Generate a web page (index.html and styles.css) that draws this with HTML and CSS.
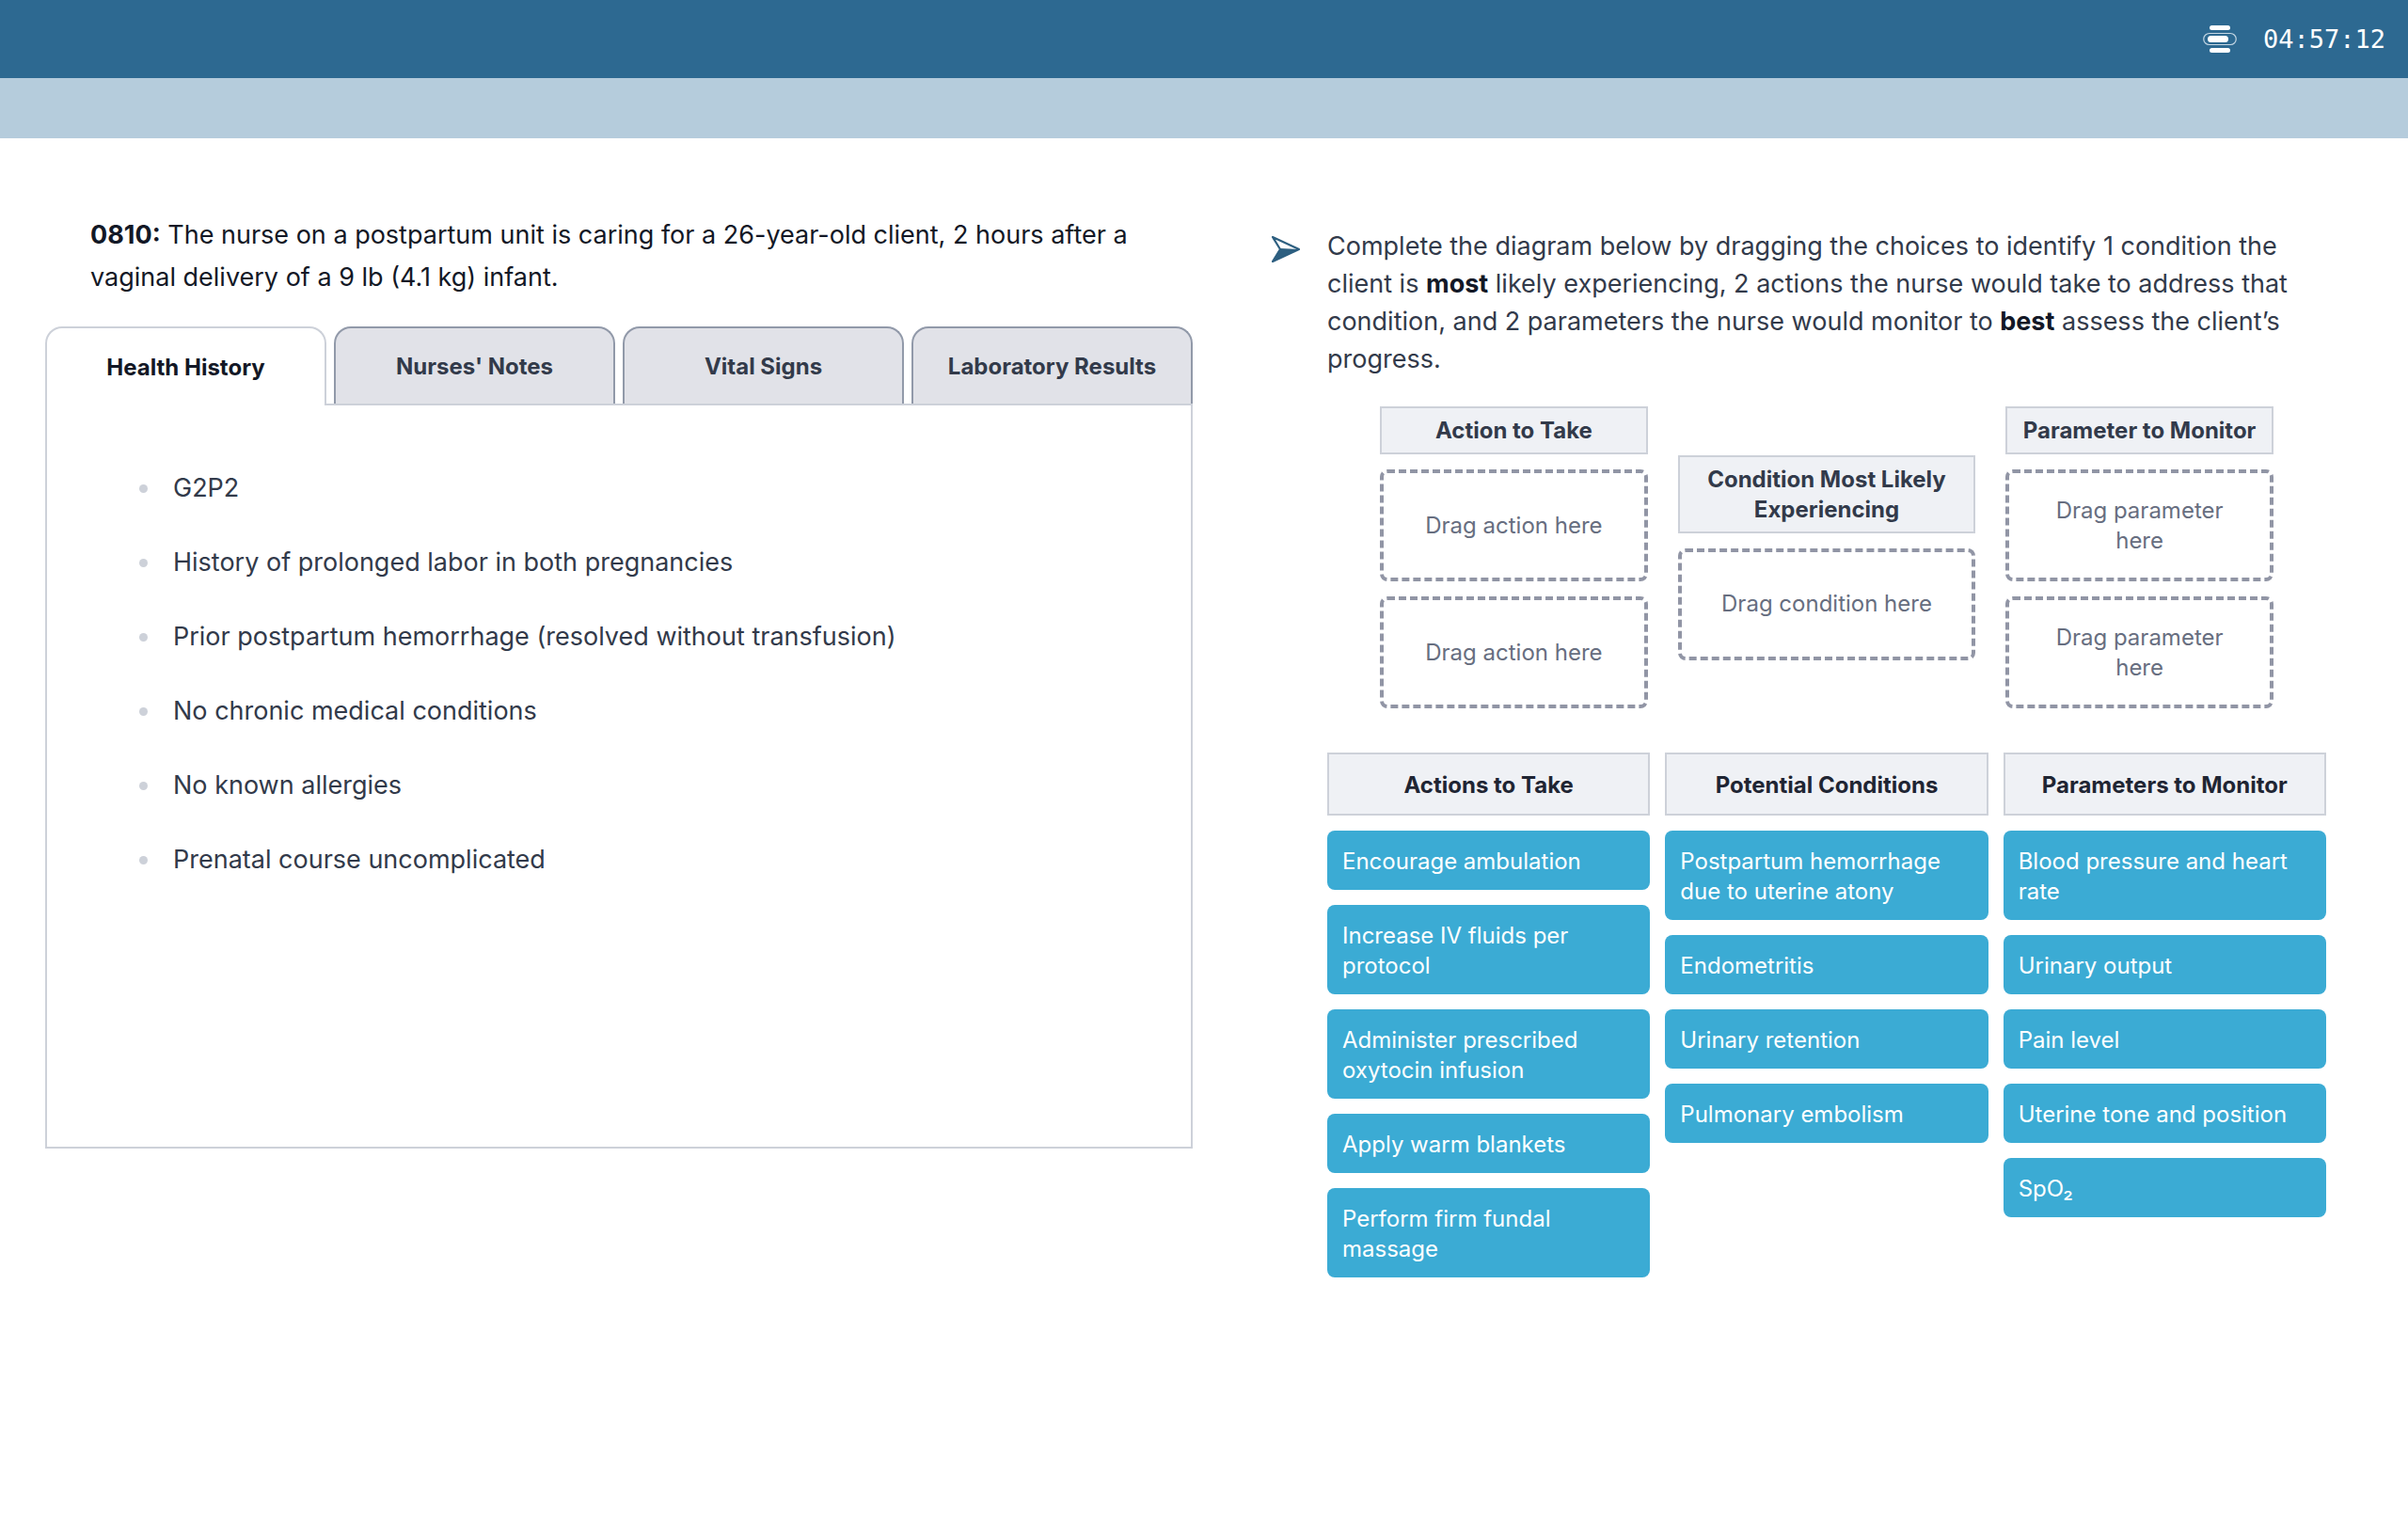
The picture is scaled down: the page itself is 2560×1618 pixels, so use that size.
FILE: index.html
```html
<!DOCTYPE html>
<html lang="en">
<head>
  <meta charset="UTF-8" />
  <meta name="viewport" content="width=device-width, initial-scale=1.0" />
  <title>Postpartum Case Study</title>
  <link rel="stylesheet" href="styles.css">
</head>
<body>
  <header class="top-bar">
    <svg class="timer-icon" viewBox="0 0 36 30" aria-hidden="true">
      <rect x="7" y="0" width="22" height="5" rx="2.5" fill="#fff" />
      <rect x="0.75" y="8.5" width="34.5" height="12" rx="6" fill="none" stroke="#c3d6e3" stroke-width="1.2" />
      <rect x="5" y="11" width="22" height="7" rx="3.5" fill="#fff" />
      <rect x="7" y="24" width="22" height="5" rx="2.5" fill="#fff" />
    </svg>
    <span class="timer">04:57:12</span>
  </header>
  <div class="sub-bar"></div>

  <main class="question">
    <section class="case">
      <p class="scenario"><strong>0810:</strong> The nurse on a postpartum unit is caring for a 26-year-old client, 2 hours after a vaginal delivery of a 9 lb (4.1 kg) infant.</p>

      <div class="tabs" role="tablist">
        <button class="tab active" role="tab" aria-selected="true">Health History</button>
        <button class="tab" role="tab" aria-selected="false">Nurses' Notes</button>
        <button class="tab" role="tab" aria-selected="false">Vital Signs</button>
        <button class="tab" role="tab" aria-selected="false">Laboratory Results</button>
      </div>
      <div class="tab-panel" role="tabpanel">
        <ul class="history">
          <li>G2P2</li>
          <li>History of prolonged labor in both pregnancies</li>
          <li>Prior postpartum hemorrhage (resolved without transfusion)</li>
          <li>No chronic medical conditions</li>
          <li>No known allergies</li>
          <li>Prenatal course uncomplicated</li>
        </ul>
      </div>
    </section>

    <section class="answer">
      <svg class="arrow-icon" viewBox="0 0 30 28" aria-hidden="true">
        <path d="M1 1 L29 14 L1 27 L9 14 Z" fill="none" stroke="#2d5f80" stroke-width="2.2" stroke-linejoin="round" />
        <path d="M9 13 L29 14 L1 27 Z" fill="#2d5f80" />
      </svg>
      <div class="answer-body">
        <p class="instructions">Complete the diagram below by dragging the choices to identify 1 condition the client is <strong>most</strong> likely experiencing, 2 actions the nurse would take to address that condition, and 2 parameters the nurse would monitor to <strong>best</strong> assess the client’s progress.</p>

        <div class="diagram">
          <div class="diagram-column">
            <h3 class="diagram-title">Action to Take</h3>
            <div class="drop-zone">Drag action here</div>
            <div class="drop-zone">Drag action here</div>
          </div>
          <div class="diagram-column">
            <h3 class="diagram-title">Condition Most Likely Experiencing</h3>
            <div class="drop-zone">Drag condition here</div>
          </div>
          <div class="diagram-column">
            <h3 class="diagram-title">Parameter to Monitor</h3>
            <div class="drop-zone">Drag parameter here</div>
            <div class="drop-zone">Drag parameter here</div>
          </div>
        </div>

        <div class="choices">
          <div class="choice-column">
            <h3 class="choice-title">Actions to Take</h3>
            <button class="choice" draggable="true">Encourage ambulation</button>
            <button class="choice" draggable="true">Increase IV fluids per protocol</button>
            <button class="choice" draggable="true">Administer prescribed oxytocin infusion</button>
            <button class="choice" draggable="true">Apply warm blankets</button>
            <button class="choice" draggable="true">Perform firm fundal massage</button>
          </div>
          <div class="choice-column">
            <h3 class="choice-title">Potential Conditions</h3>
            <button class="choice" draggable="true">Postpartum hemorrhage due to uterine atony</button>
            <button class="choice" draggable="true">Endometritis</button>
            <button class="choice" draggable="true">Urinary retention</button>
            <button class="choice" draggable="true">Pulmonary embolism</button>
          </div>
          <div class="choice-column">
            <h3 class="choice-title">Parameters to Monitor</h3>
            <button class="choice" draggable="true">Blood pressure and heart rate</button>
            <button class="choice" draggable="true">Urinary output</button>
            <button class="choice" draggable="true">Pain level</button>
            <button class="choice" draggable="true">Uterine tone and position</button>
            <button class="choice" draggable="true">SpO₂</button>
          </div>
        </div>
      </div>
    </section>
  </main>
</body>
</html>
```
FILE: styles.css
```css
* {
  box-sizing: border-box;
}
body {
  margin: 0;
  font-family: Inter, "Liberation Sans", sans-serif;
  font-size: 27px;
  line-height: 40px;
  color: #323a4a;
  background: #fff;
}
h3, p, ul {
  margin: 0;
}
button {
  font-family: inherit;
  cursor: pointer;
}
.top-bar {
  display: flex;
  align-items: center;
  justify-content: flex-end;
  gap: 28px;
  height: 83px;
  padding: 0 24px;
  background: #2d6991;
}
.timer-icon {
  width: 36px;
  height: 30px;
}
.timer {
  font-family: "DejaVu Sans Mono", monospace;
  color: #fff;
}
.sub-bar {
  height: 64px;
  background: #b5ccdc;
}
.question {
  display: grid;
  grid-template-columns: 1fr 1fr;
}
.case {
  padding: 80px 12px 48px 48px;
}
.scenario {
  padding: 0 48px;
  line-height: 45px;
  color: #131826;
}
.tabs {
  display: grid;
  grid-template-columns: repeat(4, 1fr);
  gap: 8px;
  margin-top: 30px;
}
.tab {
  height: 82px;
  padding: 0;
  font-size: 24px;
  font-weight: 700;
  color: #323a4a;
  background: #e1e2e8;
  border: 2px solid #9199a9;
  border-bottom: none;
  border-radius: 18px 18px 0 0;
}
/* the active tab overlaps the top edge of the panel */
.tab.active {
  height: 84px;
  margin-bottom: -2px;
  z-index: 1;
  color: #131826;
  background: #fff;
  border-color: #cdd1d9;
}
.tab-panel {
  min-height: 792px;
  padding: 48px 96px;
  border: 2px solid #cdd1d9;
}
.history {
  display: flex;
  flex-direction: column;
  padding: 20px 0 0 26px;
  gap: 39px;
}
.history li {
  padding-left: 12px;
}
.history li::marker {
  color: #cdd1d9;
}
.answer {
  display: flex;
  align-items: flex-start;
  gap: 29px;
  padding: 95px 87px 48px 72px;
}
.arrow-icon {
  flex: none;
  width: 30px;
  height: 28px;
  margin-top: 9px;
}
.answer-body {
  flex: 1;
}
.instructions strong {
  color: #131826;
}
.diagram {
  display: grid;
  grid-template-columns: 9fr 10fr 9fr;
  align-items: center;
  gap: 32px;
  margin-top: 30px;
  padding: 0 56px;
}
.diagram-column,
.choice-column {
  display: flex;
  flex-direction: column;
  gap: 16px;
}
.diagram-title,
.choice-title {
  font-size: 24px;
  font-weight: 700;
  line-height: 32px;
  text-align: center;
  background: #eff1f5;
  border: 2px solid #cdd1d9;
}
.diagram-title {
  padding: 8px 8px 7px;
}
.drop-zone {
  display: flex;
  align-items: center;
  justify-content: center;
  min-height: 119px;
  padding: 0 32px;
  font-size: 24px;
  line-height: 32px;
  text-align: center;
  color: #676e80;
  border: 4px dashed #9195a5;
  border-radius: 8px;
}
.choices {
  display: grid;
  grid-template-columns: repeat(3, 1fr);
  align-items: start;
  gap: 16px;
  margin-top: 47px;
}
.choice-title {
  padding: 17px 8px 14px;
  color: #1f2533;
}
.choice {
  padding: 17px 16px 14px;
  font-size: 24px;
  line-height: 32px;
  text-align: left;
  color: #fff;
  background: #3babd4;
  border: none;
  border-radius: 8px;
}
```
